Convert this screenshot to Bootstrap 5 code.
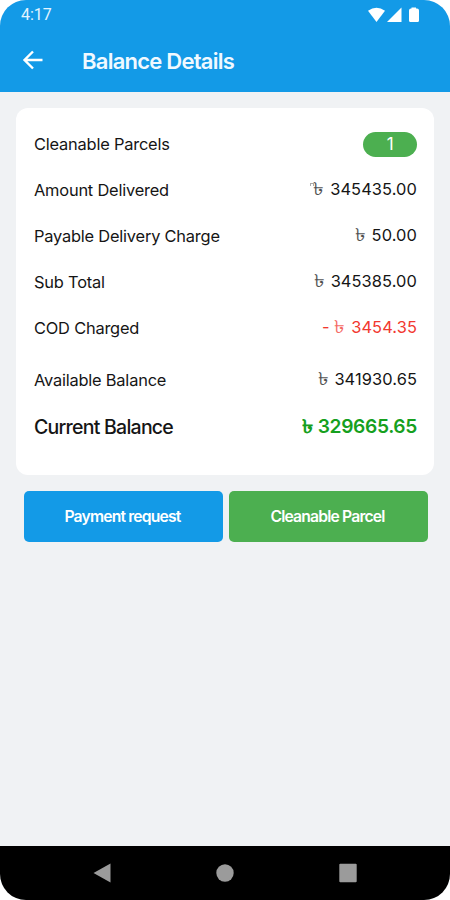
<!DOCTYPE html>
<html lang="en">
<head>
<meta charset="utf-8">
<meta name="viewport" content="width=device-width, initial-scale=1">
<title>Balance Details</title>
<link href="https://cdn.jsdelivr.net/npm/bootstrap@5.3.0/dist/css/bootstrap.min.css" rel="stylesheet">
<style>
body{font-family:Inter,"Noto Sans",sans-serif;color:#151515;background:#fff}
.screen{width:450px;height:900px;background:#f0f2f4;border-radius:26px}
.topbar{background:#139ae7;height:92px}
.status{height:29px;padding:0 30px 0 21px;font:16px/29px Roboto,sans-serif;color:#e3f4ff}
.appbar{height:62px;padding-left:22px}
.title{font-size:22px;font-weight:600;letter-spacing:-.75px;margin:0 0 0 38px;padding-top:1px;color:#f0f9ff;line-height:30px}
.panel{margin:16px 16px 0;height:367px;border-radius:12px;padding:13px 17px 0 18px}
.line{height:46px;font-size:16.4px;letter-spacing:-.2px}
.line.available{height:55px;padding-top:3px}
.line.current{height:42px;font-size:19.5px;font-weight:500;letter-spacing:-.75px;padding-top:1px}
.amount{letter-spacing:.1px;padding-bottom:1px}
.line.current .amount{color:#16a01e;letter-spacing:-.36px;font-weight:600;font-size:19.2px;padding-bottom:2px}
.taka{display:inline-block;font-weight:400;font-size:1.1em;line-height:1;opacity:.75;transform:scaleX(1.2);transform-origin:right;margin-left:2px;margin-right:1px}
.current .taka{font-weight:600;opacity:1;font-size:1em}
.tick{display:inline-block;width:4px;height:3px;border:solid #aaa;border-width:1px 1px 0;vertical-align:9px;margin-right:-1px}
.pill{width:54px;height:25px;background:#4caf50;font-size:17px;font-weight:400}
.charged{color:#f2382f}
.actions{padding:16px 22px 0 24px;gap:6px}
.actions .btn{height:51px;border:0;border-radius:5px;color:#fff;font-size:15.700px;font-weight:600;letter-spacing:-.82px;padding:7px 14px 6px 12px}
.pay{background:#139ae7}.clean{background:#4caf50}
.sysbar{height:54px;background:#000;padding:0 92px}
</style>
</head>
<body>
<main class="screen d-flex flex-column overflow-hidden">
<header class="topbar">
<div class="status d-flex justify-content-between align-items-center"><span>4:17</span>
<svg width="52" height="16" viewBox="0 0 52 16" fill="#fff"><path d="M0 3.8Q8.500-2.500 17 3.800L8.500 15Z"/><path d="M19 15 33.500.5V15Z"/><path d="M43.500 1.500V.5H48V1.500H49Q51 1.500 51 3.500V13.500Q51 15 49.500 15H42.500Q41 15 41 13.500V3.500Q41 1.500 43 1.500Z"/></svg></div>
<div class="appbar d-flex align-items-center">
<svg width="22" height="20" viewBox="0 0 22 20" fill="none" stroke="#fff" stroke-width="2.400"><path d="M20.500 10H3M11 1.500 2.500 10 11 18.500"/></svg>
<h1 class="title">Balance Details</h1></div>
</header>
<section class="panel bg-white">
<div class="line d-flex justify-content-between align-items-center"><span>Cleanable Parcels</span><span class="pill badge rounded-pill d-flex align-items-center justify-content-center">1</span></div>
<div class="line d-flex justify-content-between align-items-center"><span>Amount Delivered</span><span class="amount"><span class="tick"></span><span class="taka">৳</span> 345435.00</span></div>
<div class="line d-flex justify-content-between align-items-center"><span>Payable Delivery Charge</span><span class="amount"><span class="taka">৳</span> 50.00</span></div>
<div class="line d-flex justify-content-between align-items-center"><span>Sub Total</span><span class="amount"><span class="taka">৳</span> 345385.00</span></div>
<div class="line d-flex justify-content-between align-items-center"><span>COD Charged</span><span class="amount charged">- <span class="taka">৳</span> 3454.35</span></div>
<div class="line available d-flex justify-content-between align-items-center"><span>Available Balance</span><span class="amount"><span class="taka">৳</span> 341930.65</span></div>
<div class="line current d-flex justify-content-between align-items-center"><span>Current Balance</span><span class="amount"><span class="taka">৳</span> 329665.65</span></div>
</section>
<div class="actions d-flex"><button class="btn pay flex-fill w-50">Payment request</button><button class="btn clean flex-fill w-50">Cleanable Parcel</button></div>
<nav class="sysbar mt-auto d-flex align-items-center justify-content-between">
<svg width="20" height="20" viewBox="0 0 20 20" fill="#9b9b9b"><path d="M1.500 10 18.500.5V19.500Z"/></svg>
<svg width="20" height="20" viewBox="0 0 20 20" fill="#9b9b9b"><circle cx="10" cy="10" r="8.700"/></svg>
<svg width="20" height="20" viewBox="0 0 20 20" fill="#9b9b9b"><rect x="1.300" y=".8" width="17.400" height="18.400" rx="1"/></svg>
</nav>
</main>
<script src="https://cdn.jsdelivr.net/npm/bootstrap@5.3.0/dist/js/bootstrap.bundle.min.js"></script>
</body>
</html>
